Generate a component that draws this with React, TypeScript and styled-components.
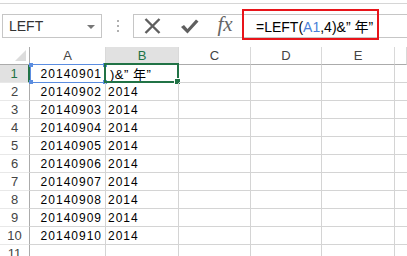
import React from "react";
import styled, { createGlobalStyle } from "styled-components";

const GlobalStyle = createGlobalStyle`
  html, body { margin: 0; padding: 0; background: #fff; }
  body { font-family: "Liberation Sans", "Noto Sans CJK JP", sans-serif; }
`;

const Page = styled.div`
  width: 407px;
  height: 256px;
  overflow: hidden;
  background: #fff;
  display: flex;
  flex-direction: column;
`;

const Bar = styled.div`
  margin-top: 3px;
  border-top: 1px solid #d6d6d6;
  padding-top: 10px;
  display: flex;
  align-items: stretch;
  height: 24px;
`;

const NameBox = styled.div`
  margin-left: 2px;
  width: 100px;
  box-sizing: border-box;
  border: 1px solid #c6c6c6;
  display: flex;
  align-items: center;
  justify-content: space-between;
  padding: 0 6px 0 6px;
  font-size: 14px;
  color: #333;
`;

const Caret = styled.span`
  width: 0;
  height: 0;
  border-left: 4px solid transparent;
  border-right: 4px solid transparent;
  border-top: 4px solid #777;
  margin-top: 1px;
`;

const Grip = styled.div`
  width: 31px;
  display: flex;
  flex-direction: column;
  align-items: center;
  justify-content: center;
  gap: 3px;
`;

const Dot = styled.span`
  width: 2px;
  height: 2px;
  background: #b0b0b0;
`;

const FxGroup = styled.div`
  flex: 1;
  box-sizing: border-box;
  border: 1px solid #c6c6c6;
  border-right: none;
  display: flex;
  align-items: center;
`;

const IconSlot = styled.div<{ $w: number }>`
  width: ${(p) => p.$w}px;
  display: flex;
  align-items: center;
  justify-content: center;
  height: 100%;
`;

const Fx = styled.span`
  font-family: "Liberation Serif", serif;
  font-style: italic;
  font-size: 21px;
  color: #666;
  margin-top: -3px;
`;

const Input = styled.div`
  position: relative;
  flex: 1;
  align-self: stretch;
  border-left: 1px solid #c6c6c6;
  display: flex;
  align-items: center;
  padding-left: 13px;
  font-size: 14px;
  letter-spacing: 0;
  color: #000;
  white-space: nowrap;
`;

const Ref = styled.span`
  color: #4a7fd8;
`;

const RedFrame = styled.div`
  position: absolute;
  left: -1px;
  top: -6px;
  width: 137px;
  height: 31px;
  box-sizing: border-box;
  border: 2px solid #e8141a;
  pointer-events: none;
`;

const Sheet = styled.div`
  margin-top: 9px;
  display: grid;
  grid-template-columns: 30px 76px 73px 72px 71px 73px 12px;
  grid-auto-rows: 18px;
  font-size: 13px;
`;

const ColHead = styled.div<{ $active?: boolean }>`
  box-sizing: border-box;
  border-right: 1px solid #d9d9d9;
  border-bottom: 1px solid #ababab;
  background: ${(p) => (p.$active ? "#e1e1e1" : "#fff")};
  color: ${(p) => (p.$active ? "#217346" : "#444")};
  display: flex;
  align-items: center;
  justify-content: center;
  font-size: 13px;
`;

const Corner = styled.div`
  position: relative;
  box-sizing: border-box;
  border-right: 1px solid #ababab;
  border-bottom: 1px solid #ababab;
`;

const Tri = styled.div`
  position: absolute;
  right: 3px;
  bottom: 3px;
  width: 0;
  height: 0;
  border-left: 11px solid transparent;
  border-bottom: 11px solid #dcdcdc;
`;

const RowHead = styled.div<{ $active?: boolean }>`
  box-sizing: border-box;
  border-right: ${(p) => (p.$active ? "2px solid #217346" : "1px solid #ababab")};
  border-bottom: 1px solid #e8e8e8;
  background: ${(p) => (p.$active ? "#e1e1e1" : "#fff")};
  color: ${(p) => (p.$active ? "#217346" : "#444")};
  display: flex;
  align-items: center;
  justify-content: center;
  font-size: 13px;
`;

const Cell = styled.div<{ $align?: "left" | "right" }>`
  position: relative;
  box-sizing: border-box;
  border-right: 1px solid #d4d4d4;
  border-bottom: 1px solid #d4d4d4;
  display: flex;
  align-items: center;
  justify-content: ${(p) => (p.$align === "right" ? "flex-end" : "flex-start")};
  padding: 0 3px 0 2px;
  font-size: 12px;
  letter-spacing: 1px;
  color: #000;
  white-space: nowrap;
`;

const Edge = styled.div`
  box-sizing: border-box;
  border-bottom: 1px solid #d4d4d4;
`;

const Active = styled.div`
  position: absolute;
  left: -2px;
  top: -2px;
  right: -1px;
  bottom: -1px;
  border: 2px solid #217346;
  pointer-events: none;
`;

const Handle = styled.div`
  position: absolute;
  right: -4px;
  bottom: -4px;
  width: 5px;
  height: 5px;
  background: #217346;
  border: 1px solid #fff;
`;

const RefFrame = styled.div`
  position: absolute;
  left: 0;
  top: -1px;
  right: -1px;
  bottom: -1px;
  border: 1px solid #5b8de0;
  pointer-events: none;
`;

const Knob = styled.span<{ $x: "l" | "r"; $y: "t" | "b" }>`
  position: absolute;
  width: 4px;
  height: 4px;
  background: #5b8de0;
  ${(p) => (p.$x === "l" ? "left: -2px;" : "right: -2px;")}
  ${(p) => (p.$y === "t" ? "top: -2px;" : "bottom: -2px;")}
`;

const EditText = styled.span`
  padding-left: 2px;
  letter-spacing: 0.5px;
  font-size: 13px;
`;

const cols = ["A", "B", "C", "D", "E"];
const rows = Array.from({ length: 11 }, (_, i) => i + 1);

export default function App() {
  return (
    <Page>
      <GlobalStyle />
      <Bar>
        <NameBox>
          <span>LEFT</span>
          <Caret />
        </NameBox>
        <Grip>
          <Dot />
          <Dot />
          <Dot />
        </Grip>
        <FxGroup>
          <IconSlot $w={36}>
            <svg width="17" height="16" viewBox="0 0 17 16">
              <path d="M1.5 1 L15.5 15 M15.5 1 L1.5 15" stroke="#5f5f5f" strokeWidth="2.4" fill="none" />
            </svg>
          </IconSlot>
          <IconSlot $w={38}>
            <svg width="19" height="15" viewBox="0 0 19 15">
              <path d="M1 8 L4 6 L7.5 10 L16 0.5 L18.5 2.5 L7.5 14.5 Z" fill="#5f5f5f" />
            </svg>
          </IconSlot>
          <IconSlot $w={34}>
            <Fx>fx</Fx>
          </IconSlot>
          <Input>
            <span>
              =LEFT(<Ref>A1</Ref>,4)&amp;” 年”
            </span>
            <RedFrame />
          </Input>
        </FxGroup>
      </Bar>
      <Sheet>
        <Corner>
          <Tri />
        </Corner>
        {cols.map((c) => (
          <ColHead key={c} $active={c === "B"}>
            {c}
          </ColHead>
        ))}
        <ColHead />
        {rows.map((r) => (
          <React.Fragment key={r}>
            <RowHead $active={r === 1}>{r}</RowHead>
            {r === 1 ? (
              <>
                <Cell $align="right">
                  20140901
                  <RefFrame>
                    <Knob $x="l" $y="t" />
                    <Knob $x="r" $y="t" />
                    <Knob $x="l" $y="b" />
                    <Knob $x="r" $y="b" />
                  </RefFrame>
                </Cell>
                <Cell>
                  <EditText>)&amp;” 年”</EditText>
                  <Active>
                    <Handle />
                  </Active>
                </Cell>
              </>
            ) : r <= 10 ? (
              <>
                <Cell $align="right">{`201409${String(r).padStart(2, "0")}`}</Cell>
                <Cell>2014</Cell>
              </>
            ) : (
              <>
                <Cell />
                <Cell />
              </>
            )}
            <Cell />
            <Cell />
            <Cell />
            <Edge />
          </React.Fragment>
        ))}
      </Sheet>
    </Page>
  );
}
